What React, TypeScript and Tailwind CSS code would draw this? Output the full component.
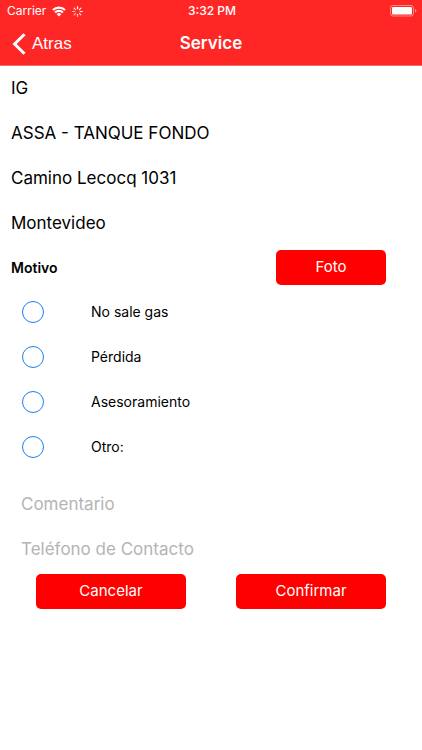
import React from 'react';

const datos = ['IG', 'ASSA - TANQUE FONDO', 'Camino Lecocq 1031', 'Montevideo'];

const motivos = [
  { id: 'no-sale-gas', label: 'No sale gas' },
  { id: 'perdida', label: 'Pérdida' },
  { id: 'asesoramiento', label: 'Asesoramiento' },
  { id: 'otro', label: 'Otro:' },
];

const spinnerOpacity = [1, 0.95, 0.9, 0.8, 0.7, 0.65, 0.7, 0.85];

function WifiIcon() {
  return (
    <svg width="14" height="11" viewBox="0 0 14 11" fill="none" stroke="currentColor" strokeWidth="2.1" aria-hidden="true">
      <path d="M0.9 4.1a8.700 8.700 0 0 1 12.200 0" />
      <path d="M3.100 6.500a5.600 5.600 0 0 1 7.800 0" />
      <path d="M7 10.600 4.700 8.200a3.300 3.300 0 0 1 4.600 0Z" fill="currentColor" stroke="none" />
    </svg>
  );
}

function Spinner() {
  return (
    <svg width="11" height="11" viewBox="0 0 10 10" stroke="currentColor" strokeWidth="1.1" strokeLinecap="round" aria-hidden="true">
      {spinnerOpacity.map((opacity, index) => (
        <path key={index} d="M5 0.6v1.900" opacity={opacity} transform={`rotate(${index * 45} 5 5)`} />
      ))}
    </svg>
  );
}

function BatteryIcon() {
  return (
    <svg width="27" height="12" viewBox="0 0 27 12" fill="none" aria-hidden="true">
      <rect x="0.5" y="0.5" width="23" height="10.5" rx="2.500" stroke="white" strokeOpacity="0.45" />
      <rect x="2" y="2" width="20" height="7.5" rx="1" fill="white" />
      <path d="M25 4v3.600c0.800-0.300 1.400-1 1.400-1.800S25.800 4.300 25 4Z" fill="white" fillOpacity="0.5" />
    </svg>
  );
}

export default function App() {
  return (
    <div className="min-h-screen bg-white text-black font-['Inter',sans-serif]">
      <header className="bg-[#ff2626] text-white border-b border-[#f56b6b]">
        {/* Status bar */}
        <div className="grid grid-cols-3 items-center h-[22px] pl-[7px] pr-[5px] text-xs">
          <div className="flex items-center gap-[6px]">
            <span>Carrier</span>
            <WifiIcon />
            <Spinner />
          </div>
          <span className="text-center font-medium">3:32 PM</span>
          <div className="flex justify-end">
            <BatteryIcon />
          </div>
        </div>

        {/* Navigation bar */}
        <nav className="grid grid-cols-3 items-center h-[43px] px-3 text-[17px]">
          <a href="#atras" className="flex items-center gap-[6px] font-['Liberation_Sans',sans-serif]">
            <svg width="14" height="22" viewBox="0 0 14 22" fill="none" stroke="currentColor" strokeWidth="3" aria-hidden="true">
              <path d="M12.500 1.200 2.600 11l9.900 9.800" />
            </svg>
            Atras
          </a>
          <h1 className="text-center font-semibold">Service</h1>
        </nav>
      </header>

      <main>
        {datos.map((dato) => (
          <p key={dato} className="flex items-center h-[45px] px-[11px] text-[17px]">
            {dato}
          </p>
        ))}

        <form>
          <div className="flex items-center justify-between h-[43px] pl-[11px] pr-9">
            <h2 id="motivo" className="text-sm font-semibold">Motivo</h2>
            <button type="button" className="w-[110px] h-[35px] rounded-[5px] bg-[#ff0000] text-white text-[15px]">
              Foto
            </button>
          </div>

          <div role="radiogroup" aria-labelledby="motivo">
            {motivos.map((motivo) => (
              <div key={motivo.id} className="flex items-center gap-[47px] h-[45px] px-[22px]">
                <input
                  type="radio"
                  id={motivo.id}
                  name="motivo"
                  value={motivo.id}
                  className="appearance-none size-[22px] rounded-full border border-[#1a80f0] checked:bg-[#1a80f0]"
                />
                <label htmlFor={motivo.id} className="text-sm">{motivo.label}</label>
              </div>
            ))}
          </div>

          <div className="flex flex-col pt-3 px-[21px]">
            <input
              type="text"
              aria-label="Comentario"
              placeholder="Comentario"
              className="w-full h-[45px] text-[17px] outline-none placeholder:text-[#b4b4b4]"
            />
            <input
              type="tel"
              aria-label="Teléfono de Contacto"
              placeholder="Teléfono de Contacto"
              className="w-full h-[45px] text-[17px] outline-none placeholder:text-[#b4b4b4]"
            />
          </div>

          <div className="flex justify-between px-9 pt-[3px]">
            <button type="button" className="w-[150px] h-[35px] rounded-[5px] bg-[#ff0000] text-white text-[15px]">
              Cancelar
            </button>
            <button type="submit" className="w-[150px] h-[35px] rounded-[5px] bg-[#ff0000] text-white text-[15px]">
              Confirmar
            </button>
          </div>
        </form>
      </main>
    </div>
  );
}
